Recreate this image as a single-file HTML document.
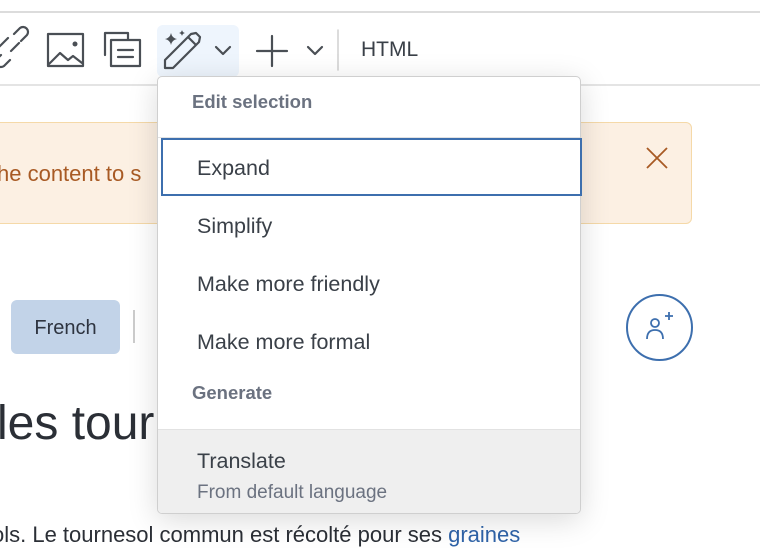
<!DOCTYPE html>
<html><head><meta charset="utf-8"><style>
*{margin:0;padding:0;box-sizing:border-box}
body{width:760px;height:530px;overflow:hidden;background:#fff;font-family:"Liberation Sans",Arial,sans-serif;position:relative;color:#3a4048}
.a{position:absolute}
</style></head><body>
<div class="a" style="left:0;top:11px;width:760px;height:2px;background:#dcdcdc"></div>
<div class="a" style="left:0;top:84px;width:760px;height:2px;background:#e4e4e4"></div>
<div class="a" style="left:157px;top:25px;width:82px;height:52px;background:#eef5fd;border-radius:6px"></div>
<svg class="a" style="left:0;top:0" width="440" height="85" fill="none" stroke="#4a4f55" stroke-width="2.2" stroke-linecap="round" stroke-linejoin="round">
<path d="M-2 48 L8 38 M14 34 l6-6 a5 5 0 0 1 7 7 l-6 6 M1 55 l-4 4 a5 5 0 0 0 7 7 l6-6 M11 51 l8-8"/>
<rect x="48" y="34" width="35" height="32"/>
<path d="M49 64 L60 53 L68 60 L73 56 L82 63"/><circle cx="75" cy="44" r="2.5" fill="#4a4f55" stroke="none"/>
<path d="M105 55 V33 H128 V39"/><rect x="111" y="40" width="29" height="26"/><path d="M118 50 H133 M118 57 H133"/>
<path d="M165 60 L191 34 L196 33 L200 37 L199 42 L173 68 L165 68 Z M188 37 L196 45"/>
<path d="M171 33 Q172 38 177 39 Q172 40 171 45 Q170 40 165 39 Q170 38 171 33Z" fill="#4a4f55" stroke="none"/>
<path d="M182 30 Q182.5 32.5 185 33 Q182.5 33.5 182 36 Q181.5 33.5 179 33 Q181.5 32.5 182 30Z" fill="#4a4f55" stroke="none"/>
<path d="M216 47 L223 54 L230 47"/>
<path d="M257 51 H287 M272 36 V66"/>
<path d="M308 47 L315 54 L322 47"/>
<path d="M338 30 V70" stroke="#d0d0d0" stroke-width="1.5"/>
</svg>
<div class="a" style="left:361px;top:38px;font-size:21px;color:#3a4048">HTML</div>

<div class="a" style="left:-10px;top:122px;width:702px;height:102px;background:#fcf0e3;border:1.5px solid #f5d9a8;border-radius:6px"></div>
<div class="a" style="left:-3px;top:161px;font-size:22px;color:#a85a24">he content to s</div>
<svg class="a" style="left:645px;top:146px" width="24" height="24" stroke="#a85a24" stroke-width="1.8"><path d="M2 2 L22 22 M22 2 L2 22"/></svg>

<div class="a" style="left:11px;top:300px;width:109px;height:54px;background:#c2d3e8;border-radius:6px;font-size:20px;line-height:56px;text-align:center;color:#2e3440">French</div>
<div class="a" style="left:133px;top:310px;width:2px;height:33px;background:#ccc"></div>
<div class="a" style="left:626px;top:294px;width:67px;height:67px;border:2px solid #3d6fae;border-radius:50%"></div>
<svg class="a" style="left:640px;top:308px" width="40" height="40" fill="none" stroke="#3d6fae" stroke-width="1.8"><circle cx="15" cy="15" r="4"/><path d="M7 31 Q7 22 15 22 Q23 22 23 31 M25 8 H33 M29 4 V12"/></svg>
<div class="a" style="left:-3px;top:396px;font-size:48px;color:#2b2f36">les tour</div>
<div class="a" style="left:-8px;top:522px;font-size:22px;color:#2b2f36;white-space:nowrap">ols. Le tournesol commun est récolté pour ses <span style="color:#2f63a8">graines</span></div>

<div class="a" style="left:157px;top:76px;width:424px;height:438px;background:#fff;border:1.5px solid #cfcfcf;border-radius:5px;box-shadow:0 6px 30px rgba(0,0,0,.15);overflow:hidden">
<div class="a" style="left:34px;top:14px;font-size:18.5px;font-weight:bold;color:#6b7280">Edit selection</div>
<div class="a" style="left:0;top:60px;width:424px;height:1px;background:#e2e2e2"></div>
<div class="a" style="left:39px;top:79px;font-size:21.5px">Expand</div>
<div class="a" style="left:39px;top:137px;font-size:21.5px">Simplify</div>
<div class="a" style="left:39px;top:195px;font-size:21.5px">Make more friendly</div>
<div class="a" style="left:39px;top:253px;font-size:21.5px">Make more formal</div>
<div class="a" style="left:34px;top:305px;font-size:18.5px;font-weight:bold;color:#6b7280">Generate</div>
<div class="a" style="left:0;top:352px;width:424px;height:90px;background:#efefef;border-top:1px solid #e2e2e2"></div>
<div class="a" style="left:39px;top:372px;font-size:21.5px">Translate</div>
<div class="a" style="left:39px;top:405px;font-size:19px;color:#6b7280">From default language</div>
</div>
<div class="a" style="left:161px;top:138px;width:421px;height:58px;border:2px solid #3d6fae"></div>
</body></html>
